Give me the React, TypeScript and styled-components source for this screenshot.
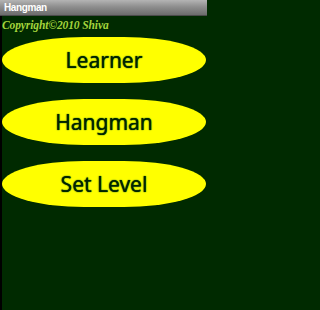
import React from 'react';
import styled, { createGlobalStyle } from 'styled-components';

const GlobalStyle = createGlobalStyle`
  html, body {
    margin: 0;
    padding: 0;
    background: #002a00;
  }
  #root {
    width: 207px;
    height: 310px;
  }
`;

const Screen = styled.div`
  width: 207px;
  height: 310px;
  display: flex;
  flex-direction: column;
  overflow: hidden;
  background: #002a00;
`;

const TitleBar = styled.div`
  height: 15px;
  flex: none;
  display: flex;
  align-items: center;
  padding-left: 4px;
  background: linear-gradient(to bottom, #b4b4b4 0%, #8e8e8e 45%, #6c6c6c 100%);
  border-bottom: 1px solid #4a4a4a;
  color: #ffffff;
  font-family: 'Liberation Sans', Arial, sans-serif;
  font-weight: bold;
  font-size: 10px;
  letter-spacing: -0.4px;
`;

const Body = styled.div`
  flex: 1;
  display: flex;
  flex-direction: column;
  border-left: 2px solid #000000;
`;

const Copyright = styled.div`
  padding: 1px 0 0 0;
  height: 17px;
  font-family: 'Liberation Serif', 'DejaVu Serif', serif;
  font-style: italic;
  font-weight: bold;
  font-size: 11.5px;
  line-height: 17px;
  letter-spacing: -0.1px;
  color: #a4d43c;
`;

const Menu = styled.div`
  display: flex;
  flex-direction: column;
  gap: 16px;
  padding: 3px 1px 0 0;
`;

const OvalButton = styled.button`
  height: 46px;
  width: 100%;
  border: none;
  border-radius: 82px / 23px;
  background: #ffff00;
  display: flex;
  align-items: center;
  justify-content: center;
  padding: 0;
  font-family: 'Noto Sans', 'Open Sans', sans-serif;
  font-size: 21px;
  color: #002400;
  text-shadow: 0 0 1px #002400, 0 0 2px #9ccf2a;
  cursor: pointer;
`;

const items = ['Learner', 'Hangman', 'Set Level'];

export default function App() {
  return (
    <>
      <GlobalStyle />
      <Screen>
        <TitleBar>Hangman</TitleBar>
        <Body>
          <Copyright>Copyright©2010 Shiva</Copyright>
          <Menu>
            {items.map(label => (
              <OvalButton key={label}>{label}</OvalButton>
            ))}
          </Menu>
        </Body>
      </Screen>
    </>
  );
}
